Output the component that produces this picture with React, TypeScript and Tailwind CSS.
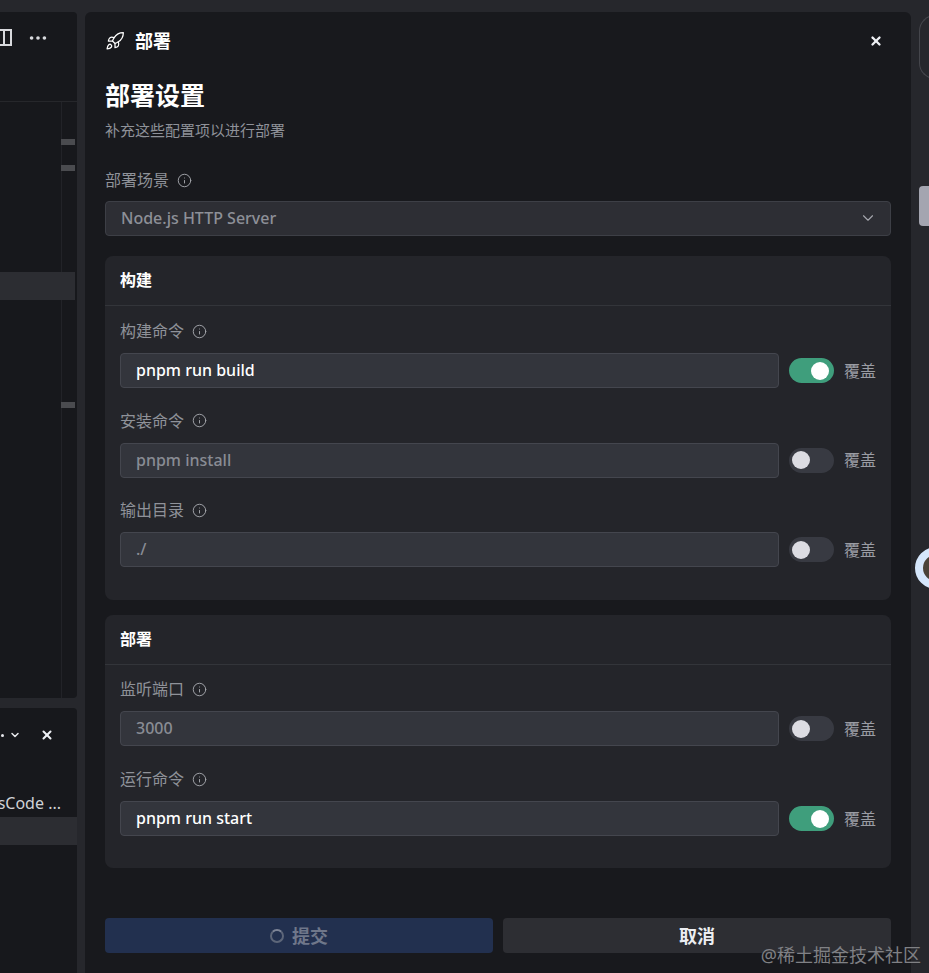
import React from "react";
import { ChevronDown, Info, MoreHorizontal, Rocket, X } from "lucide-react";

const font = { fontFamily: '"Noto Sans", "Noto Sans CJK SC", sans-serif' };

const Label = ({ text }: { text: string }) => (
  <div className="flex items-center gap-[8px] h-5 text-base text-[#8f9299]">
    <span>{text}</span>
    <Info size={15} strokeWidth={1.5} className="text-[#a5a7ad]" />
  </div>
);

const Field = ({ label, value, on }: { label: string; value: string; on?: boolean }) => (
  <div>
    <Label text={label} />
    <div className="flex items-center mt-3">
      <div
        className={
          "h-[35px] w-[659px] flex items-center px-[15px] pb-px rounded border border-[#44464e] bg-[#33353c] text-base font-medium " +
          (on ? "text-white" : "text-[#898c94]")
        }
      >
        {value}
      </div>
      <div
        className={
          "ml-[10px] w-[45px] h-[25px] rounded-full flex items-center " +
          (on ? "bg-[#3f9e7c] justify-end pr-[5px]" : "bg-[#383a42] justify-start pl-[3px]")
        }
      >
        <div className={"w-[18px] h-[18px] rounded-full " + (on ? "bg-white" : "bg-[#dcdce2]")} />
      </div>
      <span className="ml-[10px] text-base text-[#9a9ca3]">覆盖</span>
    </div>
  </div>
);

const Card = ({
  title,
  children,
  className,
  bodyClass,
}: {
  title: string;
  children: React.ReactNode;
  className: string;
  bodyClass: string;
}) => (
  <div className={"rounded-lg bg-[#24252a] " + className}>
    <div className="h-[50px] flex items-center px-[15px] pb-[2px] border-b border-[#33353a] text-base font-bold text-white">
      {title}
    </div>
    <div className={"flex flex-col px-[15px] " + bodyClass}>{children}</div>
  </div>
);

export default function App() {
  return (
    <div style={font} className="h-[973px] w-[929px] overflow-hidden bg-[#26272c] flex pt-3 relative">
      {/* left panels, cut off by the window */}
      <div className="w-[77px] shrink-0 flex flex-col gap-[10px] h-[961px]">
        <div className="h-[686px] rounded-r bg-[#17181c] flex flex-col">
          <div className="h-[90px] shrink-0 border-b border-[#26272b] flex justify-end pt-[15px] pr-[28px] gap-[15px]">
            <div className="w-[12px] h-[17px] mt-[2px] border-2 border-l-0 border-[#d8d9dd] relative">
              <div className="absolute left-[3px] top-0 bottom-0 w-[2px] bg-[#d8d9dd]" />
            </div>
            <MoreHorizontal size={22} className="text-[#d8d9dd]" />
          </div>
          <div className="relative flex-1">
            <div className="absolute right-[15px] top-0 bottom-0 w-px bg-[#222328]" />
            <div className="absolute right-[2px] top-[37px] w-[14px] h-[6px] bg-[#4a4b4f]" />
            <div className="absolute right-[2px] top-[63px] w-[14px] h-[6px] bg-[#4a4b4f]" />
            <div className="absolute right-[2px] top-[300px] w-[14px] h-[6px] bg-[#4a4b4f]" />
            <div className="absolute left-0 right-[2px] top-[170px] h-7 bg-[#2c2d32]" />
          </div>
        </div>
        <div className="flex-1 rounded-tr bg-[#17181c] flex flex-col">
          <div className="flex justify-end items-center h-[54px] pr-[23px] text-[#e6e7eb]">
            <div className="w-[3px] h-[3px] rounded-full bg-[#e6e7eb] mr-[5px]" />
            <ChevronDown size={12} strokeWidth={3} className="mr-[19px]" />
            <X size={14} strokeWidth={3.5} className="text-[#eef0f5]" />
          </div>
          <div className="mt-[27px] h-[28px] overflow-hidden flex justify-end items-center pr-[16px] text-base text-[#d0d2d6] whitespace-nowrap">
            rsCode ...
          </div>
          <div className="h-7 bg-[#2c2d32]" />
        </div>
      </div>

      {/* deploy drawer */}
      <div className="ml-2 w-[826px] h-[961px] shrink-0 rounded-t-md bg-[#18191d] px-5 flex flex-col">
        <div className="h-[58px] shrink-0 flex items-center">
          <Rocket size={20} strokeWidth={1.5} className="text-white" />
          <span className="ml-[10px] text-lg font-bold text-white">部署</span>
          <X size={14} strokeWidth={4} className="ml-auto mr-2 text-[#eef0f5]" />
        </div>
        <h1 className="text-[25px] leading-[32px] mt-[9px] mb-px font-bold text-white">部署设置</h1>
        <p className="text-[15px] leading-5 mt-[8px] text-[#8f9299]">补充这些配置项以进行部署</p>
        <div className="mt-[30px]">
          <Label text="部署场景" />
        </div>
        <div className="mt-[11px] h-[35px] rounded border border-[#3d3f46] bg-[#2d2e34] flex items-center justify-between px-[15px] pb-px text-base font-medium text-[#8d9098]">
          <span>Node.js HTTP Server</span>
          <ChevronDown size={18} strokeWidth={1.5} className="-mr-[2px] text-[#a5a7ad]" />
        </div>
        <Card title="构建" className="mt-5 h-[344px]" bodyClass="pt-[15px] gap-[22.5px]">
          <Field label="构建命令" value="pnpm run build" on />
          <Field label="安装命令" value="pnpm install" />
          <Field label="输出目录" value="./" />
        </Card>
        <Card title="部署" className="mt-[15px] h-[253px]" bodyClass="pt-[14px] gap-[23px]">
          <Field label="监听端口" value="3000" />
          <Field label="运行命令" value="pnpm run start" on />
        </Card>
        <div className="mt-[50px] flex gap-[10px]">
          <div className="flex-1 h-[35px] rounded bg-[#22304f] flex items-center justify-center gap-[8px] text-lg font-bold text-[#6f778a]">
            <div className="w-[14px] h-[14px] rounded-full border-2 border-[#5d6679] border-t-[#7d8496]" />
            提交
          </div>
          <div className="flex-1 h-[35px] rounded bg-[#2d2e33] flex items-center justify-center text-lg font-bold text-[#eceef2]">
            取消
          </div>
        </div>
      </div>

      {/* right edge, cut off by the window */}
      <div className="ml-2 flex-1 flex flex-col items-start">
        <div className="mt-[3px] w-5 h-[64px] rounded-l-2xl border border-r-0 border-[#45464c]" />
        <div className="mt-[107px] w-5 h-[40px] rounded-l bg-[#a4a5b0]" />
      </div>
      <div className="absolute left-[915px] top-[547px] w-[42px] h-[42px] rounded-full border-[8px] border-[#d5e6fb] bg-[#4a4238]" />

      {/* watermark */}
      <div className="absolute right-[8px] bottom-[8px] text-lg leading-5 text-[#808185]">@稀土掘金技术社区</div>
    </div>
  );
}
